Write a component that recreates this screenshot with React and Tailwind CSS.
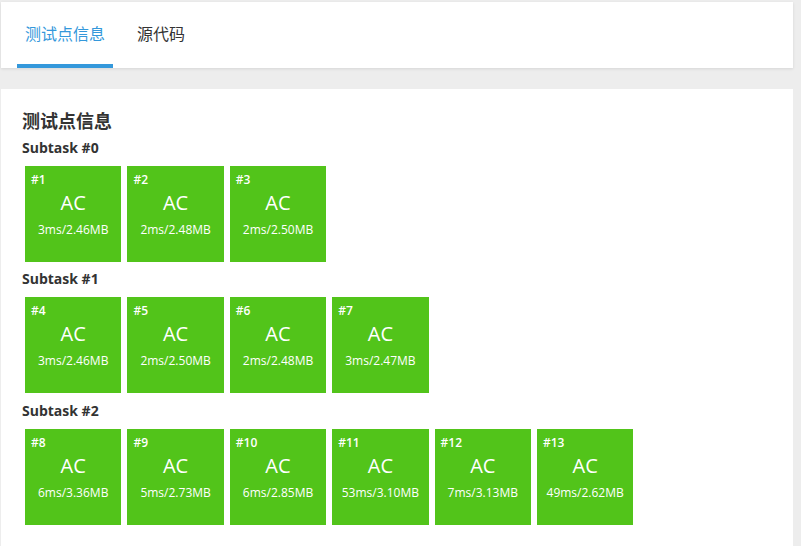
import React from 'react';

const subtasks = [
  {
    name: 'Subtask #0',
    cases: [
      { id: 1, time: '3ms', mem: '2.46MB' },
      { id: 2, time: '2ms', mem: '2.48MB' },
      { id: 3, time: '2ms', mem: '2.50MB' },
    ],
  },
  {
    name: 'Subtask #1',
    cases: [
      { id: 4, time: '3ms', mem: '2.46MB' },
      { id: 5, time: '2ms', mem: '2.50MB' },
      { id: 6, time: '2ms', mem: '2.48MB' },
      { id: 7, time: '3ms', mem: '2.47MB' },
    ],
  },
  {
    name: 'Subtask #2',
    cases: [
      { id: 8, time: '6ms', mem: '3.36MB' },
      { id: 9, time: '5ms', mem: '2.73MB' },
      { id: 10, time: '6ms', mem: '2.85MB' },
      { id: 11, time: '53ms', mem: '3.10MB' },
      { id: 12, time: '7ms', mem: '3.13MB' },
      { id: 13, time: '49ms', mem: '2.62MB' },
    ],
  },
];

const CaseBox = ({ c }) => (
  <div className="w-[96.4px] h-[96px] m-[3px] bg-[#52c41a] text-white flex flex-col relative">
    <div className="absolute left-[6px] top-[5px] text-[12px] leading-[18px] font-semibold">#{c.id}</div>
    <div className="mt-[24px] text-center text-[20px] leading-[26px]">AC</div>
    <div className="mt-[1px] text-center text-[12px] leading-[26px]">
      {c.time}/{c.mem}
    </div>
  </div>
);

const App = () => {
  return (
    <div className="min-h-[546px] bg-[#ededed] pt-[2px] pl-[1px] font-['Open_Sans','Noto_Sans_CJK_SC',sans-serif] text-[#333]">
      <div className="w-[792px] h-[66px] bg-white shadow-[0_1px_3px_rgba(0,0,0,0.1)] flex items-end pl-[16px] gap-[16px]">
        <div className="px-[8px] h-[66px] flex items-center relative text-[16px] text-[#3498db]">
          <span className="pb-[2px]">测试点信息</span>
          <div className="absolute left-0 right-0 bottom-0 h-[4px] bg-[#3498db]" />
        </div>
        <div className="px-[8px] h-[66px] flex items-center text-[16px] text-[#333]">
          <span className="pb-[2px]">源代码</span>
        </div>
      </div>
      <div className="w-[792px] mt-[21px] bg-white min-h-[460px] pt-[20px] px-[21px]">
        <h2 className="text-[18px] leading-[24px] font-bold text-[#333]">测试点信息</h2>
        {subtasks.map((s, i) => (
          <div key={i}>
            <div className={`${i === 1 ? 'mt-[4px]' : 'mt-[5px]'} text-[14px] leading-[20px] font-bold text-[#333]`}>{s.name}</div>
            <div className="mt-[5px] flex flex-wrap">
              {s.cases.map((c) => (
                <CaseBox key={c.id} c={c} />
              ))}
            </div>
          </div>
        ))}
      </div>
    </div>
  );
};

export default App;
